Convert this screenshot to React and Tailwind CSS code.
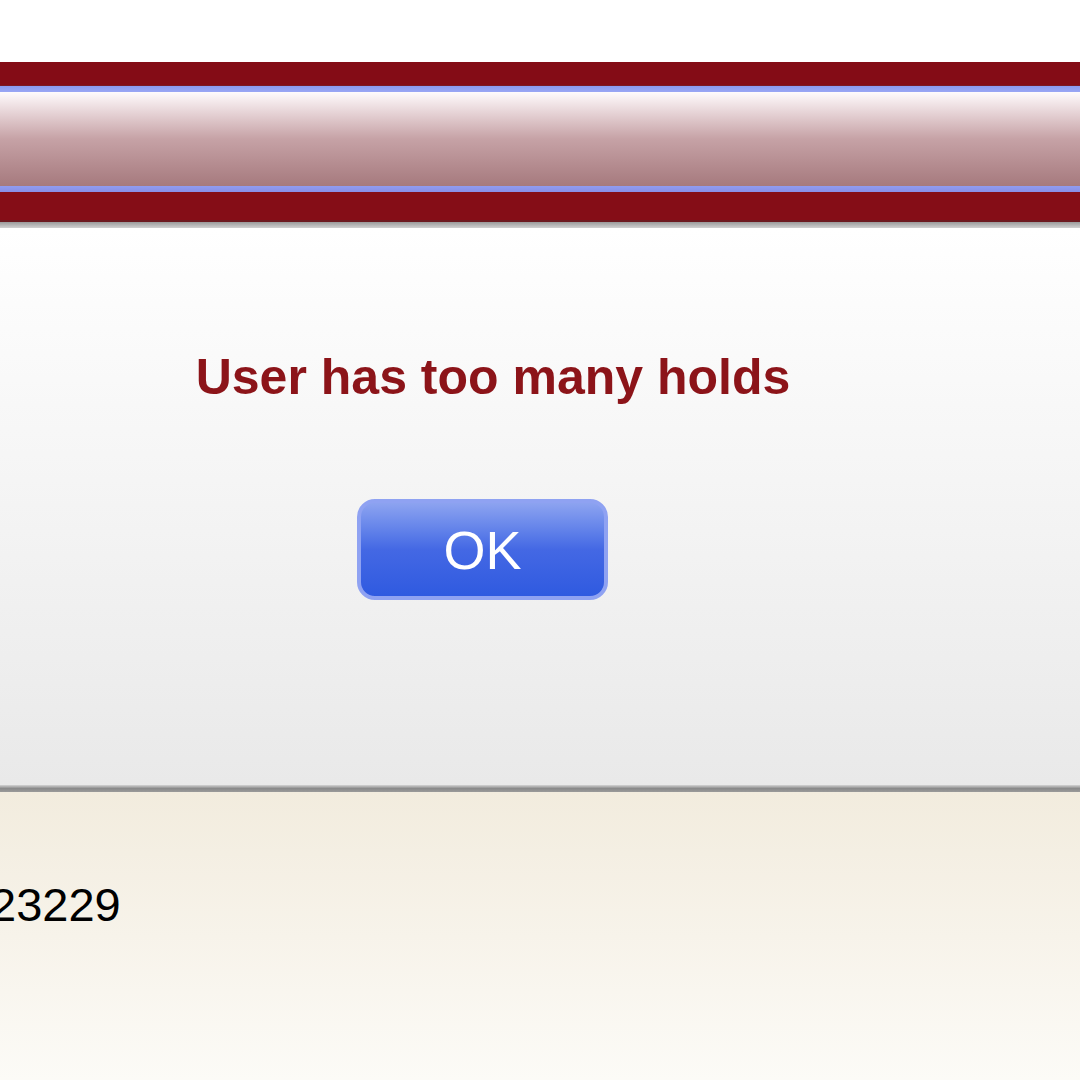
import React from 'react';

const App = () => {
    return (
        <div className="w-[1080px] h-[1080px] overflow-hidden bg-white flex flex-col" style={{ fontFamily: '"Liberation Sans", Arial, sans-serif' }}>
            <div className="h-[62px] bg-white" />
            {/* title bar */}
            <div className="h-[24px] bg-[#840c16] border-b border-[#7a1a24]" />
            <div className="h-[6px] bg-gradient-to-b from-[#8a9af0] to-[#9aa6f4]" />
            <div className="h-[94px] bg-gradient-to-b from-[#fffbfd] via-[#c6a2a6] to-[#a67a7e]" />
            <div className="h-[6px] bg-gradient-to-b from-[#8f9cf2] to-[#8a8ee6]" />
            <div className="h-[30px] bg-[#850d17] border-b-2 border-[#6e1a20]" />
            <div className="h-[6px] bg-gradient-to-b from-[#9a9a9a] to-[#d2d2d2]" />

            {/* dialog */}
            <div className="h-[557px] bg-gradient-to-b from-[#ffffff] to-[#e9e9e9] flex flex-col items-center">
                <h1 className="mt-[119px] ml-[-94px] text-[50px] leading-[60px] font-bold text-[#8c1419]">
                    User has too many holds
                </h1>
                <button className="mt-[92px] ml-[-115px] w-[251px] h-[101px] rounded-[18px] border-[4px] border-[#8fa2f2] bg-gradient-to-b from-[#8da3f0] via-[#4468e4] to-[#2f5ae0] text-white text-[54px] leading-none flex items-center justify-center">
                    OK
                </button>
            </div>
            <div className="h-[7px] bg-gradient-to-b from-[#d4d4d4] via-[#8a8a8a] to-[#9a9a9a]" />

            {/* content */}
            <div className="flex-1 bg-gradient-to-b from-[#f2ecde] via-[#f7f3ea] to-[#fcfbf7] pt-[86px]">
                <p className="ml-[-10px] text-[47px] leading-[54px] text-black">23229</p>
            </div>
        </div>
    );
};

export default App;
